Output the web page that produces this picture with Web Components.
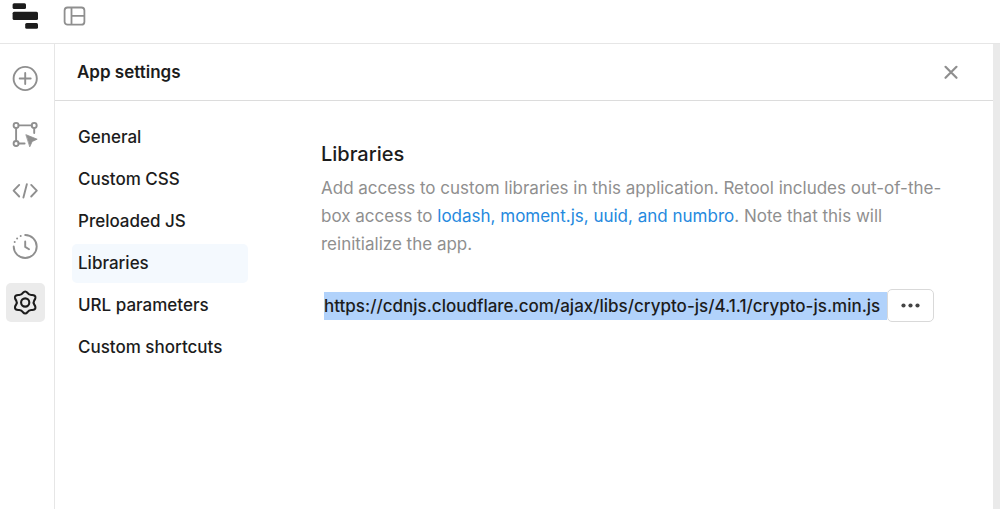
<!DOCTYPE html>
<html lang="en">
<head>
<meta charset="utf-8">
<title>App settings</title>
<style>
  html, body { height: 100%; }
  body { margin: 0; background: #fff; color: #1c1c1c; font: 500 17px/28px Inter, "Liberation Sans", sans-serif; }
</style>
</head>
<body>
<app-shell>
  <top-bar slot="top"></top-bar>
  <side-rail slot="rail"></side-rail>
  <settings-panel heading="App settings">
    <settings-nav slot="nav">
      <nav-item>General</nav-item>
      <nav-item>Custom CSS</nav-item>
      <nav-item>Preloaded JS</nav-item>
      <nav-item current>Libraries</nav-item>
      <nav-item>URL parameters</nav-item>
      <nav-item>Custom shortcuts</nav-item>
    </settings-nav>
    <library-section>
      <library-row>https://cdnjs.cloudflare.com/ajax/libs/crypto-js/4.1.1/crypto-js.min.js</library-row>
    </library-section>
  </settings-panel>
</app-shell>
<script>
const component = (name, markup, setup) => customElements.define(name, class extends HTMLElement {
  constructor() {
    super();
    const template = document.createElement('template');
    template.innerHTML = markup;
    this.attachShadow({ mode: 'open' }).append(template.content.cloneNode(true));
  }
  connectedCallback() { if (setup) setup(this, this.shadowRoot); }
});

component('app-shell', `
  <style>
    :host { display: flex; flex-direction: column; min-height: 100%; }
    .body { flex: 1; display: flex; background: #eaeaea; }
    main { flex: 1; min-width: 0; display: flex; margin-right: 7px; background: #fff; }
  </style>
  <slot name="top"></slot>
  <div class="body"><slot name="rail"></slot><main><slot></slot></main></div>
`);

component('top-bar', `
  <style>
    :host { display: block; border-bottom: 1px solid #e6e6e6; background: #fff; }
    header { display: flex; gap: 24px; height: 43px; padding-left: 12px; }
    a, button { display: block; height: 30px; padding: 0; border: 0; background: none; }
    svg { display: block; }
  </style>
  <header>
    <a href="#" aria-label="Home"><svg width="27" height="30" viewBox="0 0 27 30" fill="#1c1c1c"><rect x=".6" y="3.2" width="13.4" height="5.900" rx="1.500"/><rect x=".6" y="11.800" width="25.400" height="8.300" rx="1.500"/><rect x="13.200" y="22.900" width="12.800" height="5.900" rx="1.500"/></svg></a>
    <button type="button" aria-label="Toggle layout"><svg width="23" height="30" viewBox="0 0 23 30" fill="none" stroke="#8f8f8f" stroke-width="1.800"><rect x="1.600" y="7.500" width="19.800" height="17.200" rx="3"/><path d="M8.500 7.500v17.200M8.500 15.800h12.900"/></svg></button>
  </header>
`);

component('rail-button', `
  <style>
    :host { display: block; color: #8f8f8f; }
    :host([current]) { color: #1c1c1c; }
    button { display: grid; place-items: center; width: 39px; height: 39px; padding: 0; border: 0; border-radius: 5px; background: none; color: inherit; }
    :host([current]) button { background: #ebebeb; }
  </style>
  <button type="button"><slot></slot></button>
`, (host, root) => root.querySelector('button').setAttribute('aria-label', host.getAttribute('label')));

component('side-rail', `
  <style>
    :host { display: block; border-right: 1px solid #e6e6e6; background: #fff; }
    nav { display: flex; flex-direction: column; gap: 17px; padding: 15px 9px 15px 6px; }
    svg { display: block; width: 27px; height: 27px; fill: none; stroke: currentColor; stroke-width: 1.9; stroke-linecap: round; stroke-linejoin: round; }
  </style>
  <nav aria-label="Tools">
    <rail-button label="Add"><svg viewBox=".8 .5 27 27"><circle cx="14" cy="14" r="11.6"/><path d="M14 8.500v11M8.500 14h11"/></svg></rail-button>
    <rail-button label="Components"><svg viewBox=".8 .5 27 27"><circle cx="4.900" cy="4.900" r="2.500"/><circle cx="23" cy="4.900" r="2.500"/><circle cx="4.900" cy="23" r="2.500"/><path d="M7.400 4.900h13.100M4.900 7.400v13.100M23 7.400v5.200M7.400 23h6"/><path d="M15 14.300l11 4.400-5 2.300-2.300 5z" fill="currentColor" stroke-width=".8"/></svg></rail-button>
    <rail-button label="Code"><svg viewBox=".8 .5 27 27"><path d="M8 8.400L2.400 14.200l5.600 5.800M20 8.400l5.600 5.800-5.600 5.800M15.700 7.600L12.200 21"/></svg></rail-button>
    <rail-button label="History"><svg viewBox=".8 .5 27 27"><path d="M14 2.500A11.500 11.500 0 1 1 2.500 14M14 9v5.400l3.800 2.400"/><g fill="currentColor" stroke="none"><circle cx="9.500" cy="3.500" r="1"/><circle cx="5.900" cy="6" r="1"/><circle cx="3.500" cy="9.500" r="1"/></g></svg></rail-button>
    <rail-button label="Settings" current><svg viewBox=".8 .5 27 27" style="stroke-width:2.1"><circle cx="14" cy="14" r="4.100"/><path d="M11.800 4.300Q14 1.700 16.200 4.300Q17.700 6.700 20.300 6.500Q24.500 6.200 24.200 9.400Q24 10.800 23 12Q21.800 14 23 16Q24 17.200 24.200 18.600Q24.500 21.800 20.300 21.500Q17.700 21.300 16.200 23.700Q14 26.300 11.800 23.700Q10.300 21.300 7.700 21.500Q3.500 21.800 3.800 18.600Q4 17.200 5 16Q6.200 14 5 12Q4 10.800 3.800 9.400Q3.500 6.200 7.700 6.500Q10.300 6.700 11.800 4.300Z"/></svg></rail-button>
  </nav>
`);

component('settings-panel', `
  <style>
    :host { display: flex; flex-direction: column; flex: 1; min-width: 0; }
    header { display: flex; align-items: center; justify-content: space-between; height: 56px; padding: 0 32px 0 22px; border-bottom: 1px solid #dcdcdc; }
    h1 { margin: 0; font-size: 17px; font-weight: 600; }
    button { width: 20px; height: 20px; padding: 0; border: 0; background: none; color: #8f8f8f; }
    svg { display: block; }
    .columns { display: flex; gap: 73px; padding: 17px 48px 17px 17px; }
  </style>
  <header>
    <h1></h1>
    <button type="button" aria-label="Close"><svg width="20" height="20" viewBox="0 0 20 20" fill="none" stroke="currentColor" stroke-width="2.2" stroke-linecap="round"><path d="M4.500 4.800l11 11M15.500 4.800l-11 11"/></svg></button>
  </header>
  <div class="columns"><slot name="nav"></slot><slot></slot></div>
`, (host, root) => { root.querySelector('h1').textContent = host.getAttribute('heading'); });

component('settings-nav', `
  <style>
    :host { display: block; flex: none; width: 176px; }
    nav { display: flex; flex-direction: column; gap: 3px; }
  </style>
  <nav aria-label="Settings"><slot></slot></nav>
`);

component('nav-item', `
  <style>
    :host { display: block; }
    a { display: block; padding: 0 6px; border-radius: 5px; line-height: 39px; color: inherit; text-decoration: none; white-space: nowrap; }
    :host([current]) a { background: #f4f9fe; }
  </style>
  <a href="#"><slot></slot></a>
`, (host, root) => { if (host.hasAttribute('current')) root.querySelector('a').setAttribute('aria-current', 'page'); });

component('library-row', `
  <style>
    :host { display: flex; align-items: center; padding: 0 11px 0 3px; }
    .url { flex: 1; background: #b1d2fb; color: #1c1c1c; white-space: nowrap; }
    button { display: grid; place-items: center; flex: none; width: 47px; height: 33px; padding: 0; border: 1px solid #d9d9d9; border-radius: 5px; background: #fff; color: #444; }
  </style>
  <mark class="url"><slot></slot></mark>
  <button type="button" aria-label="More actions"><svg width="19" height="5" viewBox="0 0 19 5" fill="currentColor"><circle cx="2.500" cy="2.500" r="2.100"/><circle cx="9.500" cy="2.500" r="2.100"/><circle cx="16.500" cy="2.500" r="2.100"/></svg></button>
`);

component('library-section', `
  <style>
    :host { display: block; flex: 1; min-width: 0; padding-top: 22px; }
    h2 { margin: 0 0 6px; font-size: 20px; font-weight: 500; }
    p { margin: 0 0 31px; font-weight: 400; color: #8f8f8f; }
    a { color: #2589de; text-decoration: none; }
  </style>
  <h2>Libraries</h2>
  <p>Add access to custom libraries in this application. Retool includes out-of-the-box access to <a href="#">lodash, moment.js, uuid, and numbro</a>. Note that this will reinitialize the app.</p>
  <slot></slot>
`);
</script>
</body>
</html>
